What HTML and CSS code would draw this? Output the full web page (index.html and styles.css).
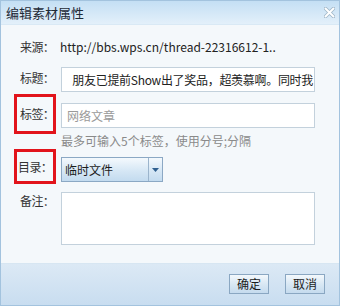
FILE: index.html
```html
<!DOCTYPE html>
<html lang="zh">
<head>
<meta charset="utf-8">
<link rel="stylesheet" href="styles.css">
</head>
<body>
<div class="dialog">
  <div class="titlebar">
    <span class="title">编辑素材属性</span>
    <svg class="close" width="11" height="11" viewBox="0 0 11 11">
      <path d="M1.5 1.5 L9.5 9.5 M9.5 1.5 L1.5 9.5" stroke="#9fb6c8" stroke-width="3.6" stroke-linecap="round"/>
      <path d="M1.5 1.5 L9.5 9.5 M9.5 1.5 L1.5 9.5" stroke="#ffffff" stroke-width="2" stroke-linecap="round"/>
    </svg>
  </div>
  <div class="body">
    <div class="row r-source">
      <div class="label">来源：</div>
      <div class="value">http://bbs.wps.cn/thread-22316612-1..</div>
    </div>
    <div class="row r-title">
      <div class="label">标题：</div>
      <div class="input"><span class="scroll">朋友已提前Show出了奖品，超羡慕啊。同时我</span></div>
    </div>
    <div class="row r-tags">
      <div class="label marked"><span class="mark mark-tags"></span>标签：</div>
      <div class="input placeholder">网络文章</div>
    </div>
    <div class="hint">最多可输入5个标签，使用分号;分隔</div>
    <div class="row r-dir">
      <div class="label marked"><span class="mark mark-dir"></span>目录：</div>
      <div class="select">
        <span class="sel-text">临时文件</span>
        <span class="sel-btn"><svg width="7" height="4" viewBox="0 0 7 4"><path d="M0 0 H7 L3.5 4 Z" fill="#2f5f8f"/></svg></span>
      </div>
    </div>
    <div class="row r-note">
      <div class="label">备注：</div>
      <div class="textarea"></div>
    </div>
  </div>
  <div class="footer">
    <button class="btn">确定</button>
    <button class="btn">取消</button>
  </div>
</div>
</body>
</html>
```
FILE: styles.css
```css
* { box-sizing: border-box; }
html, body { margin: 0; padding: 0; }
body {
  font-family: "Noto Sans CJK SC", "Noto Sans", sans-serif;
  font-size: 12px;
  color: #333;
}
.dialog {
  width: 340px;
  height: 306px;
  border: 1px solid #a3c3de;
  background: #f4f8fb;
  display: flex;
  flex-direction: column;
}
.titlebar {
  height: 24px;
  flex: none;
  display: flex;
  align-items: center;
  justify-content: space-between;
  padding: 0 4px 0 5px;
  background: linear-gradient(#c4dff4, #e3f0fa);
  border-bottom: 1px solid #d9e9f5;
}
.title {
  font-size: 13px;
  color: #1e2a36;
  line-height: 16px;
}
.close { display: block; margin-top: -1px; }
.body {
  flex: 1;
  padding: 10px 24px 0 12px;
  display: flex;
  flex-direction: column;
}
.row {
  display: flex;
  align-items: flex-start;
}
.label {
  width: 47px;
  flex: none;
  padding-left: 7px;
  text-align: left;
  letter-spacing: -0.6px;
  white-space: nowrap;
  color: #333;
  line-height: 16px;
  position: relative;
}
.value {
  line-height: 24px;
  color: #222;
  white-space: nowrap;
}
.r-source .label { line-height: 24px; }
.r-title { margin-top: 8px; }
.r-title .label { padding-top: 3px; }
.input {
  width: 254px;
  height: 25px;
  margin-left: 1px;
  border: 1px solid #c3d1dc;
  background: #fff;
  line-height: 23px;
  padding: 0 1px 0 3px;
  color: #222;
  display: flex;
  justify-content: flex-end;
  overflow: hidden;
  white-space: nowrap;
}
.scroll { flex: none; letter-spacing: -0.3px; }
.input.placeholder { justify-content: flex-start; color: #9a9a9a; padding-left: 5px; }
.r-tags { margin-top: 11px; }
.r-tags .label { padding-top: 3px; }
.hint {
  margin-top: 5px;
  margin-left: 48px;
  line-height: 16px;
  color: #8a8a8a;
}
.r-dir { margin-top: 8px; }
.r-dir .label { padding-top: 2px; padding-left: 5px; }
.mark {
  position: absolute;
  border: 3px solid #e2141b;
  pointer-events: none;
}
.mark-tags { left: 1px; top: -9px; width: 42px; height: 40px; }
.mark-dir { left: 1px; top: -8px; width: 42px; height: 35px; }
.select {
  width: 102px;
  height: 25px;
  margin-left: 1px;
  border: 1px solid #8ba8c4;
  display: flex;
  background: linear-gradient(#f4f9fd, #d6e7f5 55%, #c3dbef);
}
.sel-text {
  flex: 1;
  line-height: 23px;
  padding-left: 3px;
  color: #1c1c1c;
}
.sel-btn {
  width: 14px;
  border-left: 1px solid #9bb4cc;
  display: flex;
  align-items: center;
  justify-content: center;
}
.sel-btn svg { display: block; }
.r-note { margin-top: 10px; }
.r-note .label { padding-top: 1px; }
.textarea {
  width: 255px;
  height: 53px;
  margin-left: 1px;
  border: 1px solid #c3d1dc;
  background: #fff;
}
.footer {
  height: 42px;
  flex: none;
  border-top: 1px solid #d7e6f2;
  background: linear-gradient(#dce9f5, #c8ddf0);
  display: flex;
  justify-content: flex-end;
  gap: 16px;
  padding: 10px 14px 0 0;
}
.btn {
  width: 40px;
  height: 20px;
  padding: 0;
  border: 1px solid #8aa7c2;
  background: linear-gradient(#f3f8fc, #d9e8f4 50%, #c5dbee);
  font-family: "Noto Sans CJK SC", "Noto Sans", sans-serif;
  font-size: 12px;
  color: #1c1c1c;
  line-height: 18px;
}
```
